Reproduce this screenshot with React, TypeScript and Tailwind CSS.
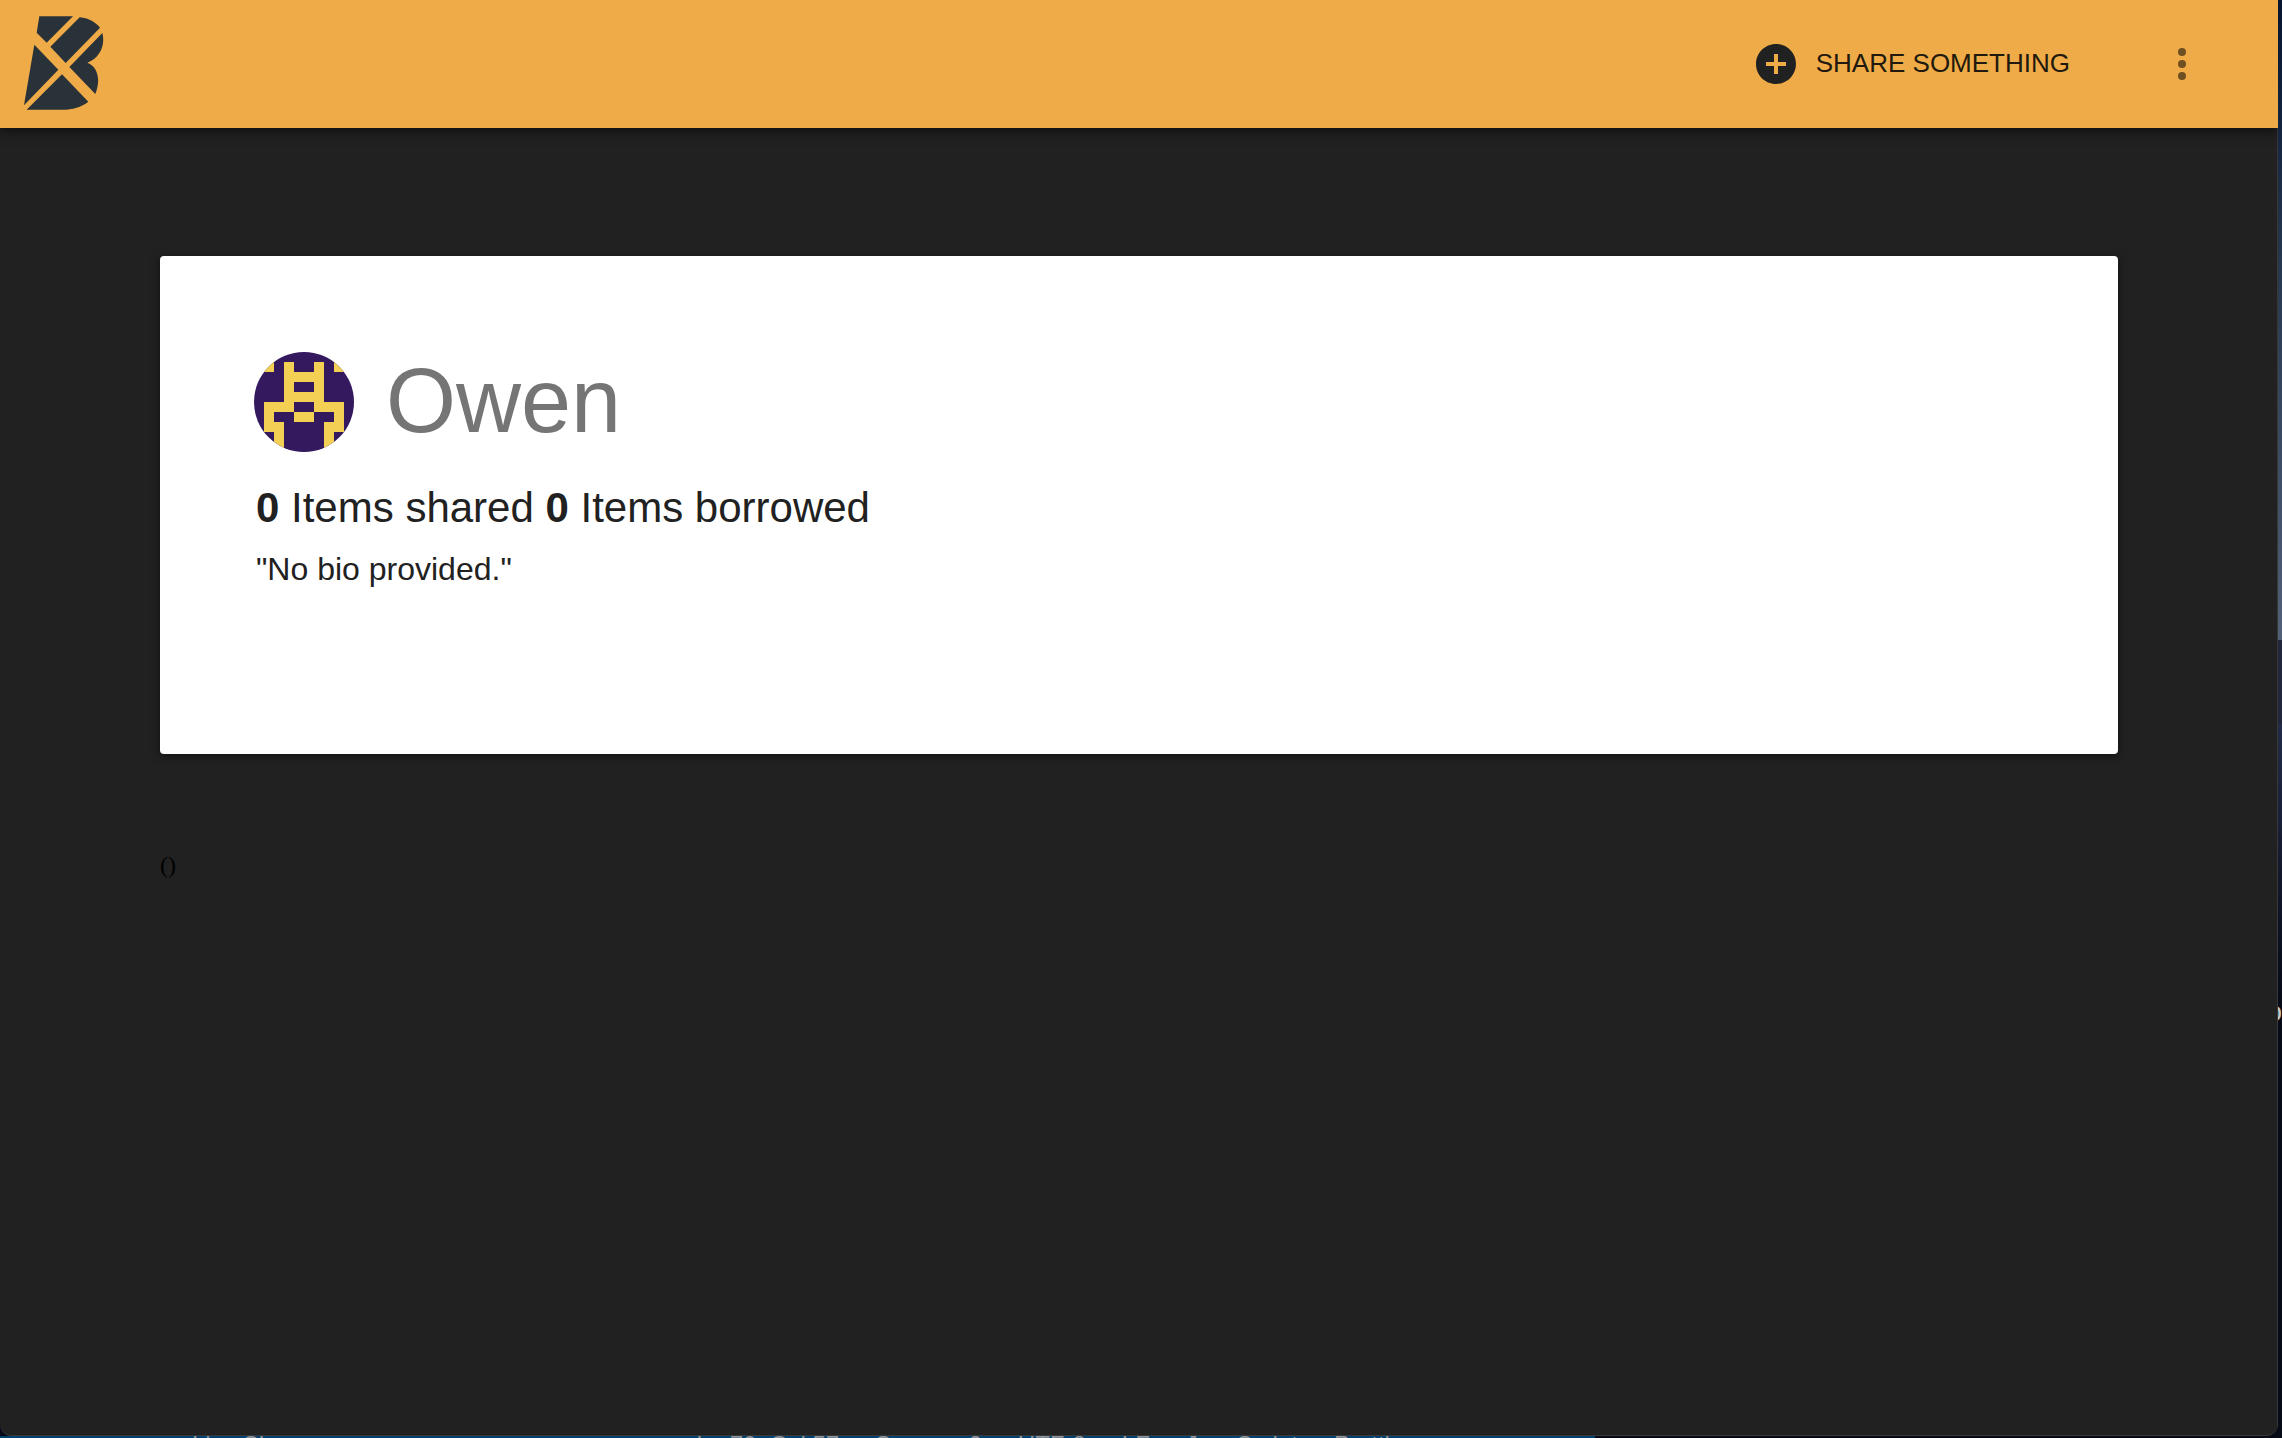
import React from "react";

const AVATAR_CELLS = [
  [3, 1], [6, 1], [0, 1], [1, 1], [8, 1], [9, 1],
  [3, 2], [4, 2], [5, 2], [6, 2],
  [3, 3], [6, 3],
  [3, 4], [4, 4], [5, 4], [6, 4],
  [1, 5], [2, 5], [3, 5], [6, 5], [7, 5], [8, 5],
  [1, 6], [4, 6], [5, 6], [8, 6],
  [1, 7], [2, 7], [7, 7], [8, 7],
  [2, 8], [7, 8],
  [2, 9], [7, 9],
];

function Logo() {
  return (
    <svg viewBox="72 47 240 288" className="h-24 w-20" fill="#293239" aria-hidden="true">
      <path d="M118 48H219L140 127L110 97Z" />
      <path d="M239 51C264 53 286 65 300 82L197 188L151 139Z" />
      <path d="M307 98C317 134 299 174 262 187C294 199 303 239 286 281L208 200Z" />
      <path d="M103 133L175 208L72 315Z" />
      <path d="M186 222L265 304C244 320 218 328 188 328H80Z" />
    </svg>
  );
}

function Avatar() {
  return (
    <svg viewBox="0 0 10 10" className="size-[100px] rounded-full bg-[#35195f]" shapeRendering="crispEdges" role="img" aria-label="Owen's avatar">
      {AVATAR_CELLS.map(([x, y]) => (
        <rect key={`${x}-${y}`} x={x} y={y} width="1" height="1" fill="#f3d053" />
      ))}
    </svg>
  );
}

function Header() {
  return (
    <header className="relative flex h-32 items-center justify-between bg-[#efab47] pr-[72px] pl-6 shadow-[0_4px_10px_rgba(0,0,0,0.5)]">
      <a href="#" aria-label="Home" className="block">
        <Logo />
      </a>
      <div className="flex items-center gap-[88px]">
        <button type="button" className="flex items-center gap-4 text-[26px] leading-8 text-[#21190d]">
          <svg viewBox="0 0 24 24" className="size-12" fill="#212121" aria-hidden="true">
            <path d="M12 2C6.48 2 2 6.48 2 12s4.48 10 10 10 10-4.480 10-10S17.520 2 12 2zm5 11h-4v4h-2v-4H7v-2h4V7h2v4h4v2z" />
          </svg>
          <span className="pb-0.5">SHARE SOMETHING</span>
        </button>
        <button type="button" aria-label="More" className="text-[#6e4f21]">
          <svg viewBox="0 0 24 24" className="size-12" fill="currentColor" aria-hidden="true">
            <circle cx="12" cy="6" r="2" />
            <circle cx="12" cy="12" r="2" />
            <circle cx="12" cy="18" r="2" />
          </svg>
        </button>
      </div>
    </header>
  );
}

function EditorStatus() {
  return (
    <footer className="h-0.5 w-[70%] overflow-hidden bg-[#00406f] text-2xl leading-[18px] whitespace-nowrap text-[#8d9298]">
      <div className="flex justify-between pr-[150px] pl-48">
        <span>Live Share</span>
        <div className="flex gap-9">
          <span>Ln 70, Col 57</span>
          <span>Spaces: 2</span>
          <span>UTF-8</span>
          <span>LF</span>
          <span>JavaScript</span>
          <span>Prettier: ✓</span>
        </div>
      </div>
    </footer>
  );
}

export default function App() {
  return (
    <div className="flex min-h-screen bg-[#070b18] font-['Liberation_Sans',Arial,sans-serif]">
      <div className="flex min-w-0 grow flex-col">
        <div className="flex grow flex-col overflow-hidden rounded-b-xl border-b border-[#383838] bg-[#212121]">
          <Header />
          <main className="grow border-r border-[#383838] pt-32 pr-[159px] pl-40">
            <section className="min-h-[498px] rounded-sm bg-white px-[94px] py-24 text-[#212121] shadow-[0_2px_10px_rgba(0,0,0,0.5)]">
              <div className="flex items-center gap-8">
                <Avatar />
                <h1 className="pb-0.5 text-[90px] leading-[96px] text-[#757575]">Owen</h1>
              </div>
              <div className="px-0.5">
                <h2 className="mt-8 text-[42px] leading-12">
                  <b>0</b> Items shared <b>0</b> Items borrowed
                </h2>
                <p className="mt-[17px] text-[32px] leading-10">"No bio provided."</p>
              </div>
            </section>
            <p className="mt-24 font-['Liberation_Serif',serif] text-2xl leading-[30px] text-black">()</p>
          </main>
        </div>
        <EditorStatus />
      </div>
      <aside className="flex w-1 flex-col overflow-hidden text-[28px] leading-9 text-[#c8c8c8]">
        <div className="h-[640px] bg-linear-to-b from-[#07142f] via-[#25364f] via-40% to-[#526078]" />
        <div className="h-[84px] bg-[#22263c]" />
        <div className="h-[270px] bg-linear-to-b from-[#222b48] to-[#070b18]" />
        <span className="self-end">o</span>
      </aside>
    </div>
  );
}
